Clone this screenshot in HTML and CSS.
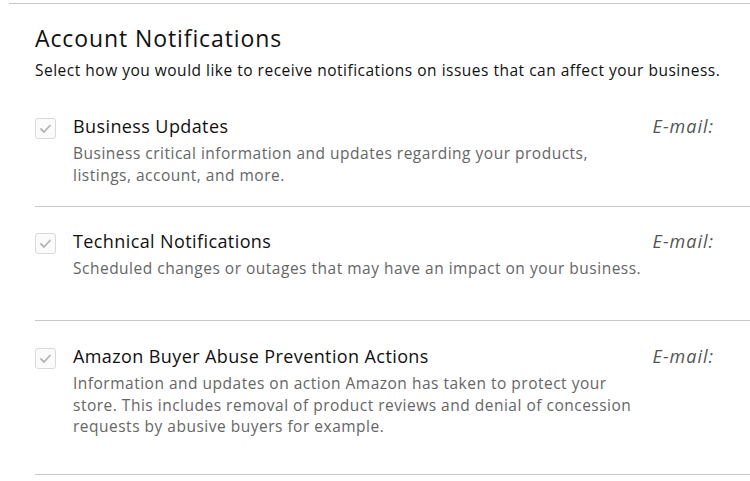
FILE: index.html
```html
<!DOCTYPE html>
<html>
<head>
<meta charset="utf-8">
<link rel="stylesheet" href="styles.css">
</head>
<body>
<div class="page">
  <div class="top-rule"></div>
  <section class="panel">
    <h1 class="title">Account Notifications</h1>
    <p class="subtitle">Select how you would like to receive notifications on issues that can affect your business.</p>
    <div class="list">
      <div class="row row-a">
        <span class="check"><svg viewBox="0 0 21 21" width="21" height="21"><path d="M6 11 L9 14 L15 7.5" fill="none" stroke="#b4b4b4" stroke-width="1.8" stroke-linecap="round" stroke-linejoin="round"/></svg></span>
        <div class="body">
          <div class="name">Business Updates</div>
          <div class="desc">Business critical information and updates regarding your products, listings, account, and more.</div>
        </div>
        <div class="channel">E-mail:</div>
      </div>
      <div class="row row-b">
        <span class="check"><svg viewBox="0 0 21 21" width="21" height="21"><path d="M6 11 L9 14 L15 7.5" fill="none" stroke="#b4b4b4" stroke-width="1.8" stroke-linecap="round" stroke-linejoin="round"/></svg></span>
        <div class="body">
          <div class="name">Technical Notifications</div>
          <div class="desc">Scheduled changes or outages that may have an impact on your business.</div>
        </div>
        <div class="channel">E-mail:</div>
      </div>
      <div class="row row-c">
        <span class="check"><svg viewBox="0 0 21 21" width="21" height="21"><path d="M6 11 L9 14 L15 7.5" fill="none" stroke="#b4b4b4" stroke-width="1.8" stroke-linecap="round" stroke-linejoin="round"/></svg></span>
        <div class="body">
          <div class="name">Amazon Buyer Abuse Prevention Actions</div>
          <div class="desc">Information and updates on action Amazon has taken to protect your store. This includes removal of product reviews and denial of concession requests by abusive buyers for example.</div>
        </div>
        <div class="channel">E-mail:</div>
      </div>
    </div>
  </section>
</div>
</body>
</html>
```
FILE: styles.css
```css
* { box-sizing: border-box; }
html, body { margin: 0; padding: 0; background: #fff; }
body {
  font-family: "Open Sans", "Noto Sans", sans-serif;
  color: #111;
  width: 750px;
  height: 481px;
  overflow: hidden;
}
.page { padding-top: 3px; }
.top-rule {
  margin-left: 9px;
  height: 1px;
  background: #c6c6c6;
}
.panel { padding-left: 35px; }
.title {
  margin: 20px 0 0 0;
  font-size: 23px;
  font-weight: 400;
  line-height: 28px;
  letter-spacing: 0.9px;
  color: #111;
}
.subtitle {
  margin: 8px 0 0 0;
  font-size: 15.5px;
  line-height: 20px;
  letter-spacing: 0.5px;
  color: #111;
}
.list { margin-top: 12px; }
.row {
  display: flex;
  align-items: flex-start;
  border-bottom: 1px solid #c8c8c8;
  padding-top: 22px;
}
.row-a { height: 115px; }
.row-b { height: 114px; }
.row-c { height: 154px; padding-top: 23px; }
.check {
  flex: none;
  width: 21px;
  height: 21px;
  border: 1px solid #d9d9d9;
  border-radius: 3px;
  background: #fbfbfb;
  margin-top: 4px;
  display: flex;
}
.check svg { display: block; margin: -1px; }
.body {
  flex: none;
  width: 579px;
  margin-left: 17px;
}
.name {
  font-size: 18px;
  line-height: 24px;
  letter-spacing: 0.4px;
  color: #111;
}
.desc {
  margin-top: 5px;
  font-size: 15.5px;
  line-height: 21.5px;
  letter-spacing: 0.5px;
  color: #666;
  max-width: 574px;
}
.channel {
  flex: 1;
  padding-right: 36px;
  text-align: right;
  font-style: italic;
  font-size: 18px;
  line-height: 24px;
  letter-spacing: 1px;
  color: #555;
}
```
